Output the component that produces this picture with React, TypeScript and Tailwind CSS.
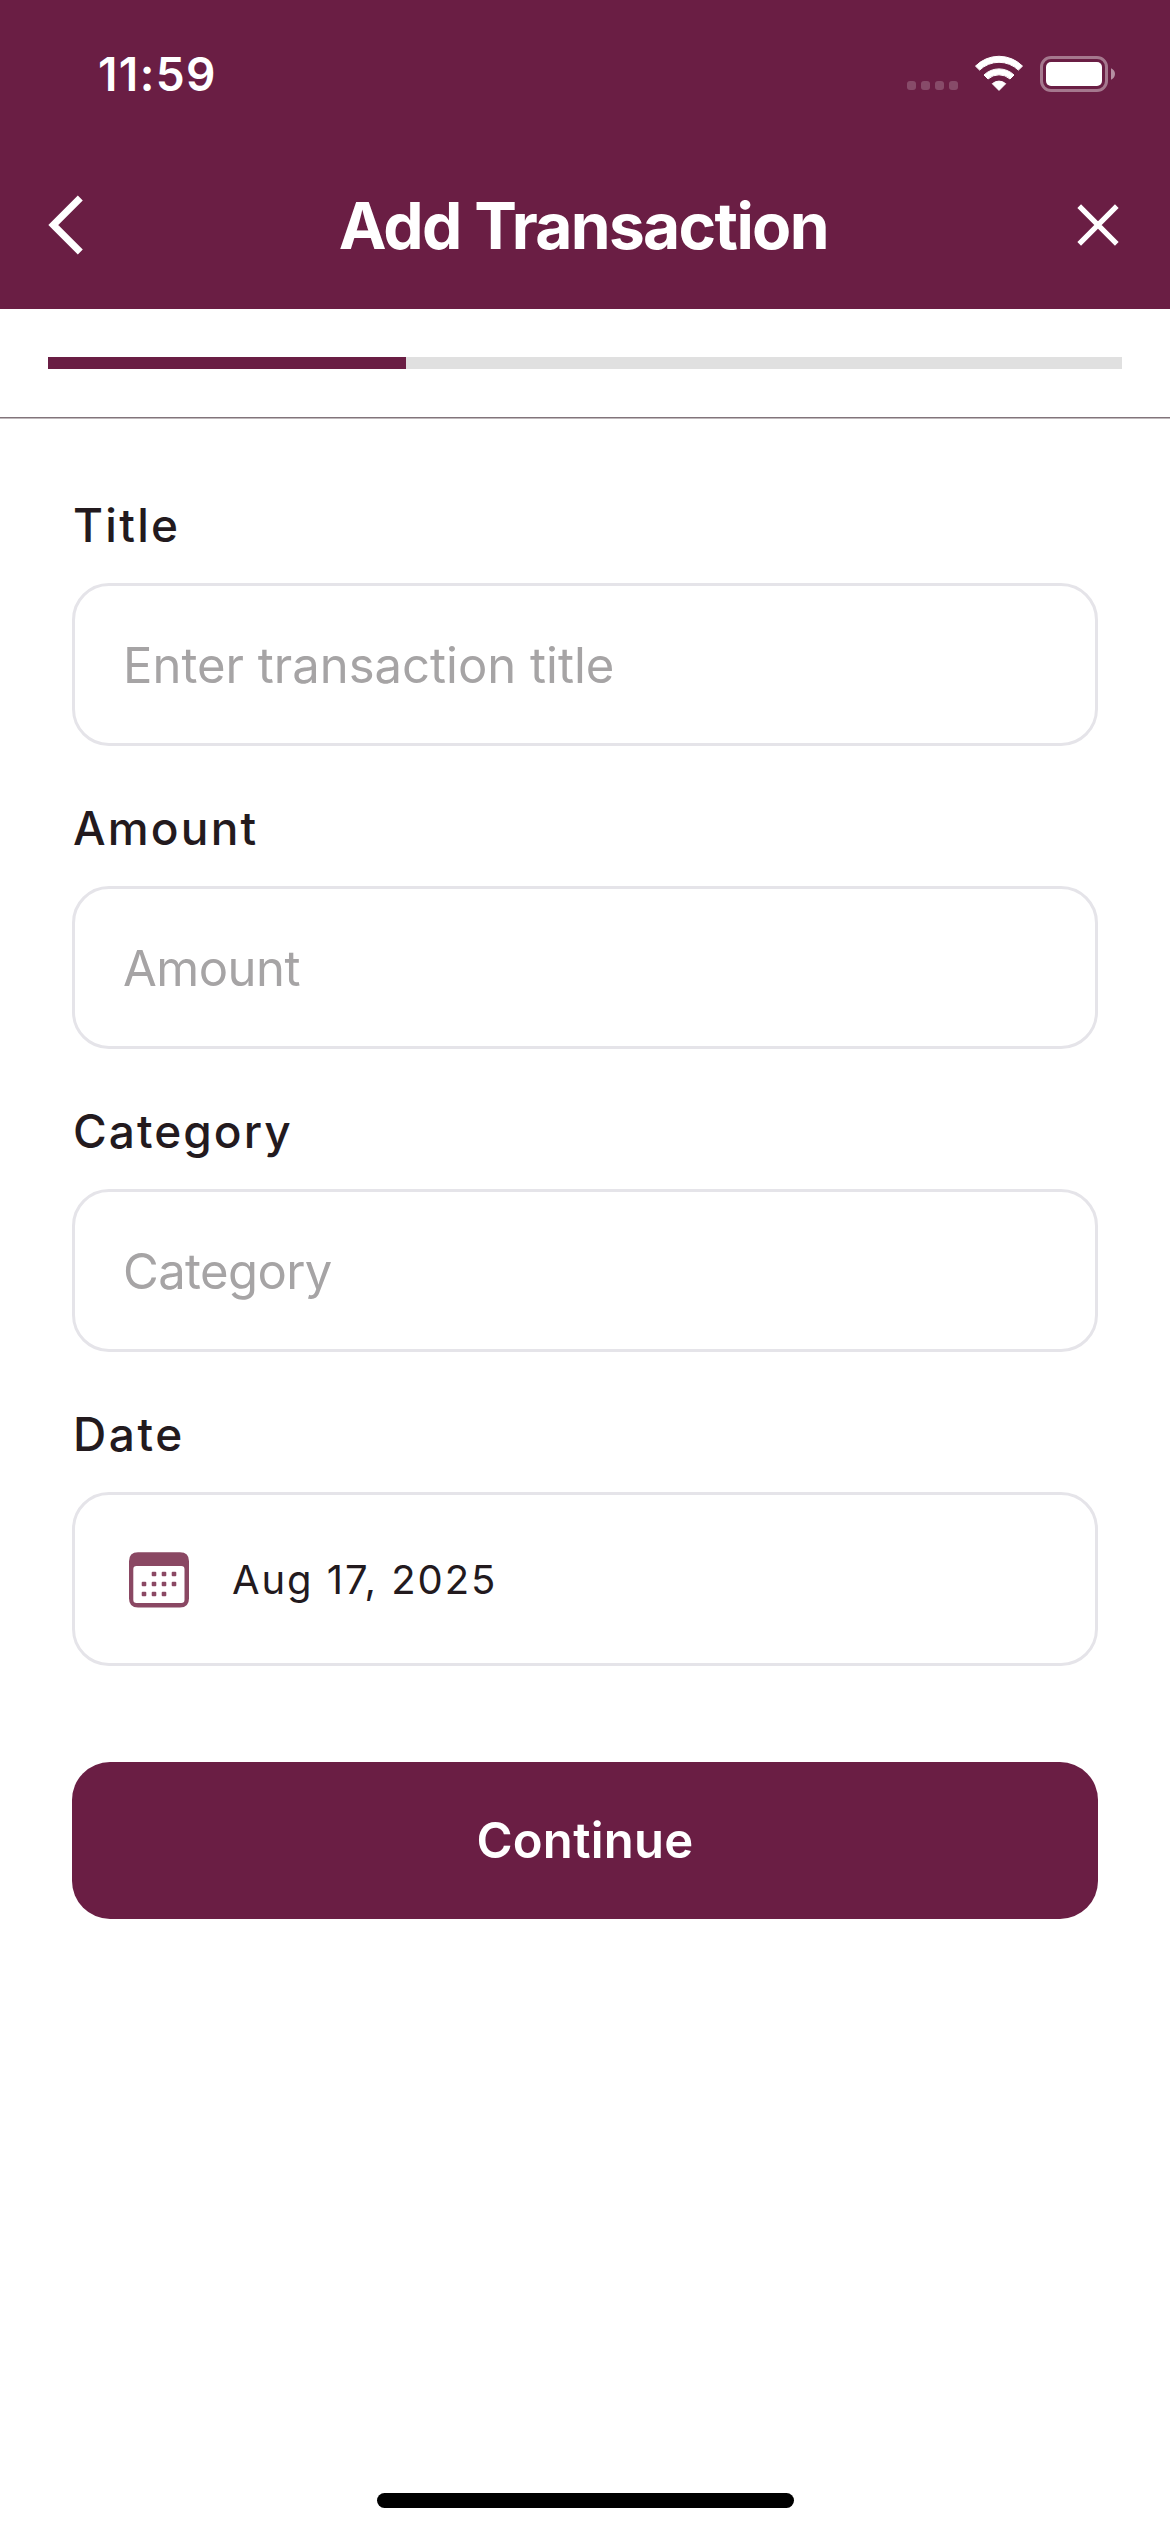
import React from "react";

function StatusIcons() {
  return (
    <div className="flex items-start">
      <div className="mt-[27px] flex gap-[5px]">
        {[0, 1, 2, 3].map((i) => (
          <span key={i} className="size-[9px] rounded-[3px] bg-white/20" />
        ))}
      </div>
      <svg className="ml-4" width="50" height="38" viewBox="0 0 50 38" fill="#fff" stroke="#fff" strokeWidth="1" strokeLinejoin="round">
        <path d="M1.5 12.1A33 33 0 0 1 48.5 12.1L44.4 16.1A28 28 0 0 0 5.6 16.1Z" />
        <path d="M10 21A21.5 21.5 0 0 1 40 21L36 25A16.5 16.5 0 0 0 14 25Z" />
        <path d="M18.3 29.7A10 10 0 0 1 31.7 29.7L25 36.4Z" />
      </svg>
      <div className="ml-4 mt-0.5 flex items-center">
        <div className="h-9 w-[68px] rounded-[11px] border-3 border-white/40 p-[3px]">
          <div className="h-full rounded-[5px] bg-white" />
        </div>
        <svg className="ml-[3px]" width="4" height="12" viewBox="0 0 4 12">
          <path d="M0 0.3C2.4 1.2 4 3.4 4 6S2.4 10.8 0 11.7Z" fill="#fff" fillOpacity=".5" />
        </svg>
      </div>
    </div>
  );
}

function CalendarIcon() {
  const dots = [
    [25, 22], [35, 22], [45, 22],
    [15, 32], [25, 32], [35, 32], [45, 32],
    [15, 42], [25, 42], [35, 42],
  ];
  return (
    <svg width="60" height="56" viewBox="0 0 60 56" fill="#8a4863">
      <path
        fillRule="evenodd"
        d="M9 0.3H51Q60 0.3 60 9.3V46.5Q60 55.5 51 55.5H9Q0 55.5 0 46.5V9.3Q0 0.3 9 0.3ZM7.500 14Q4.300 14 4.300 17.200V47.800Q4.300 51 7.500 51H52.300Q55.500 51 55.500 47.800V17.200Q55.500 14 52.300 14Z"
      />
      {dots.map(([x, y]) => (
        <rect key={`${x}-${y}`} x={x - 2.3} y={y - 2.3} width="4.600" height="4.600" rx="1" />
      ))}
    </svg>
  );
}

function Label({ text, className }: { text: string; className: string }) {
  return <div className={`h-14 text-[46px] leading-[56px] font-[470] text-[#231a1e] ${className}`}>{text}</div>;
}

function Field({ label, labelClass, placeholder, inputClass }: { label: string; labelClass: string; placeholder: string; inputClass: string }) {
  return (
    <div className="mb-[54px]">
      <Label text={label} className={labelClass} />
      <div className={`mt-[30px] flex h-[163px] items-center rounded-[37px] border-3 border-[#e5e4e9] pt-0.5 text-[49px] leading-none text-[#a6a4a5] ${inputClass}`}>
        {placeholder}
      </div>
    </div>
  );
}

export default function App() {
  return (
    <div className="flex h-[2532px] w-[1170px] flex-col overflow-hidden bg-white font-['Inter',sans-serif]">
      <header className="h-[309px] bg-[#6a1e44] text-white">
        <div className="flex h-[149px] justify-between pl-[98px] pr-[55px]">
          <div className="text-[46px] leading-[149px] font-semibold tracking-[1.4px]">11:59</div>
          <div className="pt-[54px]">
            <StatusIcons />
          </div>
        </div>
        <div className="flex h-[152px] items-center justify-between pl-12 pr-[51px]">
          <svg width="36" height="60" viewBox="0 0 36 60" fill="none" stroke="#fff" strokeWidth="7">
            <path d="M32.300 3L5.300 30L32.300 57" />
          </svg>
          <h1 className="ml-1 mr-[-1.600px] pt-0.5 text-[64px] leading-[154px] font-bold tracking-[-1.650px]">Add Transaction</h1>
          <svg width="42" height="42" viewBox="0 0 42 42" fill="none" stroke="#fff" strokeWidth="5.200">
            <path d="M2.200 2.200L39.800 39.800M39.800 2.200L2.200 39.800" />
          </svg>
        </div>
      </header>

      <div className="px-12 py-12">
        <div className="h-3 bg-[#e0e0e0]">
          <div className="h-full w-1/3 bg-[#6a1e44]" />
        </div>
      </div>
      <div className="h-px shrink-0 bg-[#81747a]" />
      <div className="h-px shrink-0 bg-[#c0b9bc]" />

      <main className="px-[72px] pt-[78px]">
        <Field label="Title" labelClass="pl-px tracking-[2.300px]" placeholder="Enter transaction title" inputClass="pl-[48px]" />
        <Field label="Amount" labelClass="pl-px tracking-[2.200px]" placeholder="Amount" inputClass="pl-[48px] tracking-[-0.500px]" />
        <Field label="Category" labelClass="pl-px tracking-[2.050px]" placeholder="Category" inputClass="pl-[48px] tracking-[-0.600px]" />
        <Label text="Date" className="pl-px tracking-[2.600px]" />
        <div className="mt-[30px] flex h-[174px] items-center rounded-[37px] border-3 border-[#e5e4e9] pt-px pl-[54px]">
          <CalendarIcon />
          <div className="ml-[43px] pt-px text-[40px] leading-none tracking-[1.930px] text-[#231a1e]">Aug 17, 2025</div>
        </div>
        <button className="mt-24 h-[157px] w-full rounded-[38px] bg-[#6a1e44] text-[49px] leading-none font-semibold tracking-[0.280px] text-white">
          Continue
        </button>
      </main>

      <div className="mx-auto mb-6 mt-auto h-[15px] w-[417px] rounded-full bg-black" />
    </div>
  );
}
